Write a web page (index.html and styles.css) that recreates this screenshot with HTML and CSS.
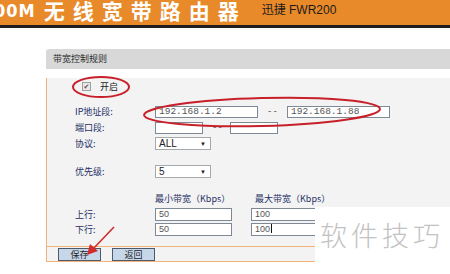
FILE: index.html
```html
<!DOCTYPE html>
<html lang="zh-CN">
<head>
    <meta charset="UTF-8">
    <title>带宽控制规则</title>
    <link rel="stylesheet" href="styles.css">
</head>
<body>
    <div class="top">
        <span class="num">00M</span>
        <span class="name">无线宽带路由器</span>
        <span class="model">迅捷 FWR200</span>
    </div>

    <div class="panel">
        <div class="panel-title">带宽控制规则</div>
        <div class="panel-body">
            <div class="row row-check">
                <span class="check">✔</span>
                <span class="on">开启</span>
            </div>
            <div class="row row-ip">
                <span class="label">IP地址段:</span>
                <span class="field w-ip mono">192.168.1.2</span>
                <span class="dash">--</span>
                <span class="field w-ip mono">192.168.1.88</span>
            </div>
            <div class="row row-port">
                <span class="label">端口段:</span>
                <span class="field w-port"></span>
                <span class="dash dash-port">--</span>
                <span class="field w-port"></span>
            </div>
            <div class="row row-proto">
                <span class="label">协议:</span>
                <span class="select">ALL<i>▼</i></span>
            </div>
            <div class="row row-prio">
                <span class="label">优先级:</span>
                <span class="select">5<i>▼</i></span>
            </div>
            <div class="row row-head">
                <span class="head head-min">最小带宽（Kbps）</span>
                <span class="head">最大带宽（Kbps）</span>
            </div>
            <div class="row row-up">
                <span class="label">上行:</span>
                <span class="field w-bw">50</span>
                <span class="field w-bw gap-bw">100</span>
            </div>
            <div class="row row-down">
                <span class="label">下行:</span>
                <span class="field w-bw">50</span>
                <span class="field w-bw gap-bw">100<b class="caret"></b></span>
            </div>
            <div class="sep"></div>
            <div class="buttons">
                <span class="btn">保存</span>
                <span class="btn">返回</span>
            </div>
        </div>
    </div>

    <!-- red marks drawn over the screenshot -->
    <svg class="marks" width="450" height="274" viewBox="0 0 450 274">
        <ellipse cx="101" cy="87" rx="28" ry="10" fill="none" stroke="#c8202a" stroke-width="2"/>
        <ellipse cx="262" cy="112" rx="118" ry="14" fill="none" stroke="#c8202a" stroke-width="2" transform="rotate(-1.5 262 112)"/>
        <line x1="114" y1="227" x2="93" y2="249" stroke="#d42a2a" stroke-width="1.6"/>
        <polygon points="87,255 90,244 98,251" fill="#d42a2a"/>
    </svg>

    <div class="watermark">软件技巧</div>
</body>
</html>
```

FILE: styles.css
```css
html, body {
    margin: 0;
    width: 450px;
    height: 274px;
    overflow: hidden;
    background: #ffffff;
    font-family: "Noto Sans CJK SC", "DejaVu Sans", sans-serif;
}
body {
    position: relative;
}

/* orange top bar */
.top {
    display: flex;
    align-items: flex-start;
    height: 25px;
    background-color: #e98a2a;
    border-bottom: 3px solid #1e1e1e;
    color: #ffffff;
    white-space: nowrap;
}
.num {
    margin-left: -6px;
    font-family: "DejaVu Sans Condensed", "DejaVu Sans", sans-serif;
    font-weight: bold;
    font-size: 18px;
    line-height: 22px;
    letter-spacing: 1px;
}
.name {
    margin-left: 8px;
    font-size: 21px;
    font-weight: bold;
    line-height: 20px;
    letter-spacing: 8px;
}
.model {
    margin-left: 15px;
    margin-top: 3px;
    font-family: "Liberation Sans", "Noto Sans CJK SC", sans-serif;
    font-size: 12px;
    line-height: 14px;
    color: #1a1a1a;
}

/* panel */
.panel {
    margin-top: 21px;
    margin-left: 46px;
    width: 420px;
}
.panel-title {
    height: 20px;
    line-height: 20px;
    padding-left: 7px;
    background-color: #d8d8d8;
    border-top-left-radius: 3px;
    font-size: 9px;
    color: #2a2a2a;
}
.panel-body {
    background-color: #f3f3f3;
    border-left: 1px solid #f2b37a;
    border-bottom: 1px solid #f2b37a;
    font-size: 9px;
    color: #1f2f66;
}

.row {
    display: flex;
    align-items: center;
    height: 12px;
}
.label {
    width: 80px;
    margin-left: 28px;
    line-height: 12px;
}

.row-check { margin-top: 9px; height: 16px; }
.row-ip    { margin-top: 12px; }
.row-port  { margin-top: 4px; }
.row-proto { margin-top: 3px; height: 13px; }
.row-prio  { margin-top: 15px; height: 13px; }
.row-head  { margin-top: 14px; }
.row-up    { margin-top: 4px; height: 13px; }
.row-down  { margin-top: 2px; height: 13px; }

.check {
    box-sizing: border-box;
    width: 9px;
    height: 9px;
    margin-left: 35px;
    border: 1px solid #a0a0a0;
    background: #e8e8e8;
    font-size: 7px;
    line-height: 7px;
    text-align: center;
    color: #555555;
}
.on {
    margin-left: 9px;
    color: #222222;
}

.field {
    box-sizing: border-box;
    height: 100%;
    padding-left: 3px;
    border: 1px solid #7d8a96;
    background: #ffffff;
    font-family: "Liberation Sans", sans-serif;
    font-size: 9px;
    line-height: 10px;
    color: #555555;
}
.mono {
    font-family: "Liberation Mono", monospace;
    font-size: 9.5px;
}
.w-ip   { width: 103px; }
.w-port { width: 48px; }
.w-bw   { width: 77px; }
.gap-bw { margin-left: 19px; }

.dash {
    width: 29px;
    padding-left: 9px;
    box-sizing: border-box;
    color: #555555;
    font-family: "Liberation Mono", monospace;
}
.dash-port { width: 27px; }

.caret {
    display: inline-block;
    width: 1px;
    height: 9px;
    margin-left: 1px;
    vertical-align: -1px;
    background: #111111;
}

.select {
    box-sizing: border-box;
    display: flex;
    justify-content: space-between;
    align-items: center;
    width: 56px;
    height: 100%;
    padding: 0 4px 0 3px;
    border: 1px solid #a4a9ae;
    background: #ffffff;
    font-family: "Liberation Sans", sans-serif;
    font-size: 10px;
    color: #222222;
}
.select i {
    font-style: normal;
    font-size: 6px;
}

.head { width: 100px; }
.head-min { margin-left: 108px; }

.sep {
    margin-top: 10px;
    height: 1px;
    background: #f2b37a;
}
.buttons {
    display: flex;
    gap: 11px;
    height: 14px;
    padding-top: 1px;
    padding-left: 11px;
    box-sizing: border-box;
}
.btn {
    box-sizing: border-box;
    width: 43px;
    height: 13px;
    border: 1px solid #4c5a6a;
    background: #c7d7ea;
    text-align: center;
    line-height: 11px;
    font-size: 9px;
    color: #1e1e1e;
}

/* overlays */
.marks {
    position: absolute;
    top: 0;
    left: 0;
    pointer-events: none;
}
.watermark {
    position: absolute;
    left: 315px;
    top: 207px;
    width: 135px;
    height: 67px;
    box-sizing: border-box;
    padding: 13px 0 0 5px;
    background: #ffffff;
    font-size: 27px;
    font-weight: 300;
    line-height: 30px;
    letter-spacing: 4px;
    color: #c2c2c2;
    white-space: nowrap;
}
```
